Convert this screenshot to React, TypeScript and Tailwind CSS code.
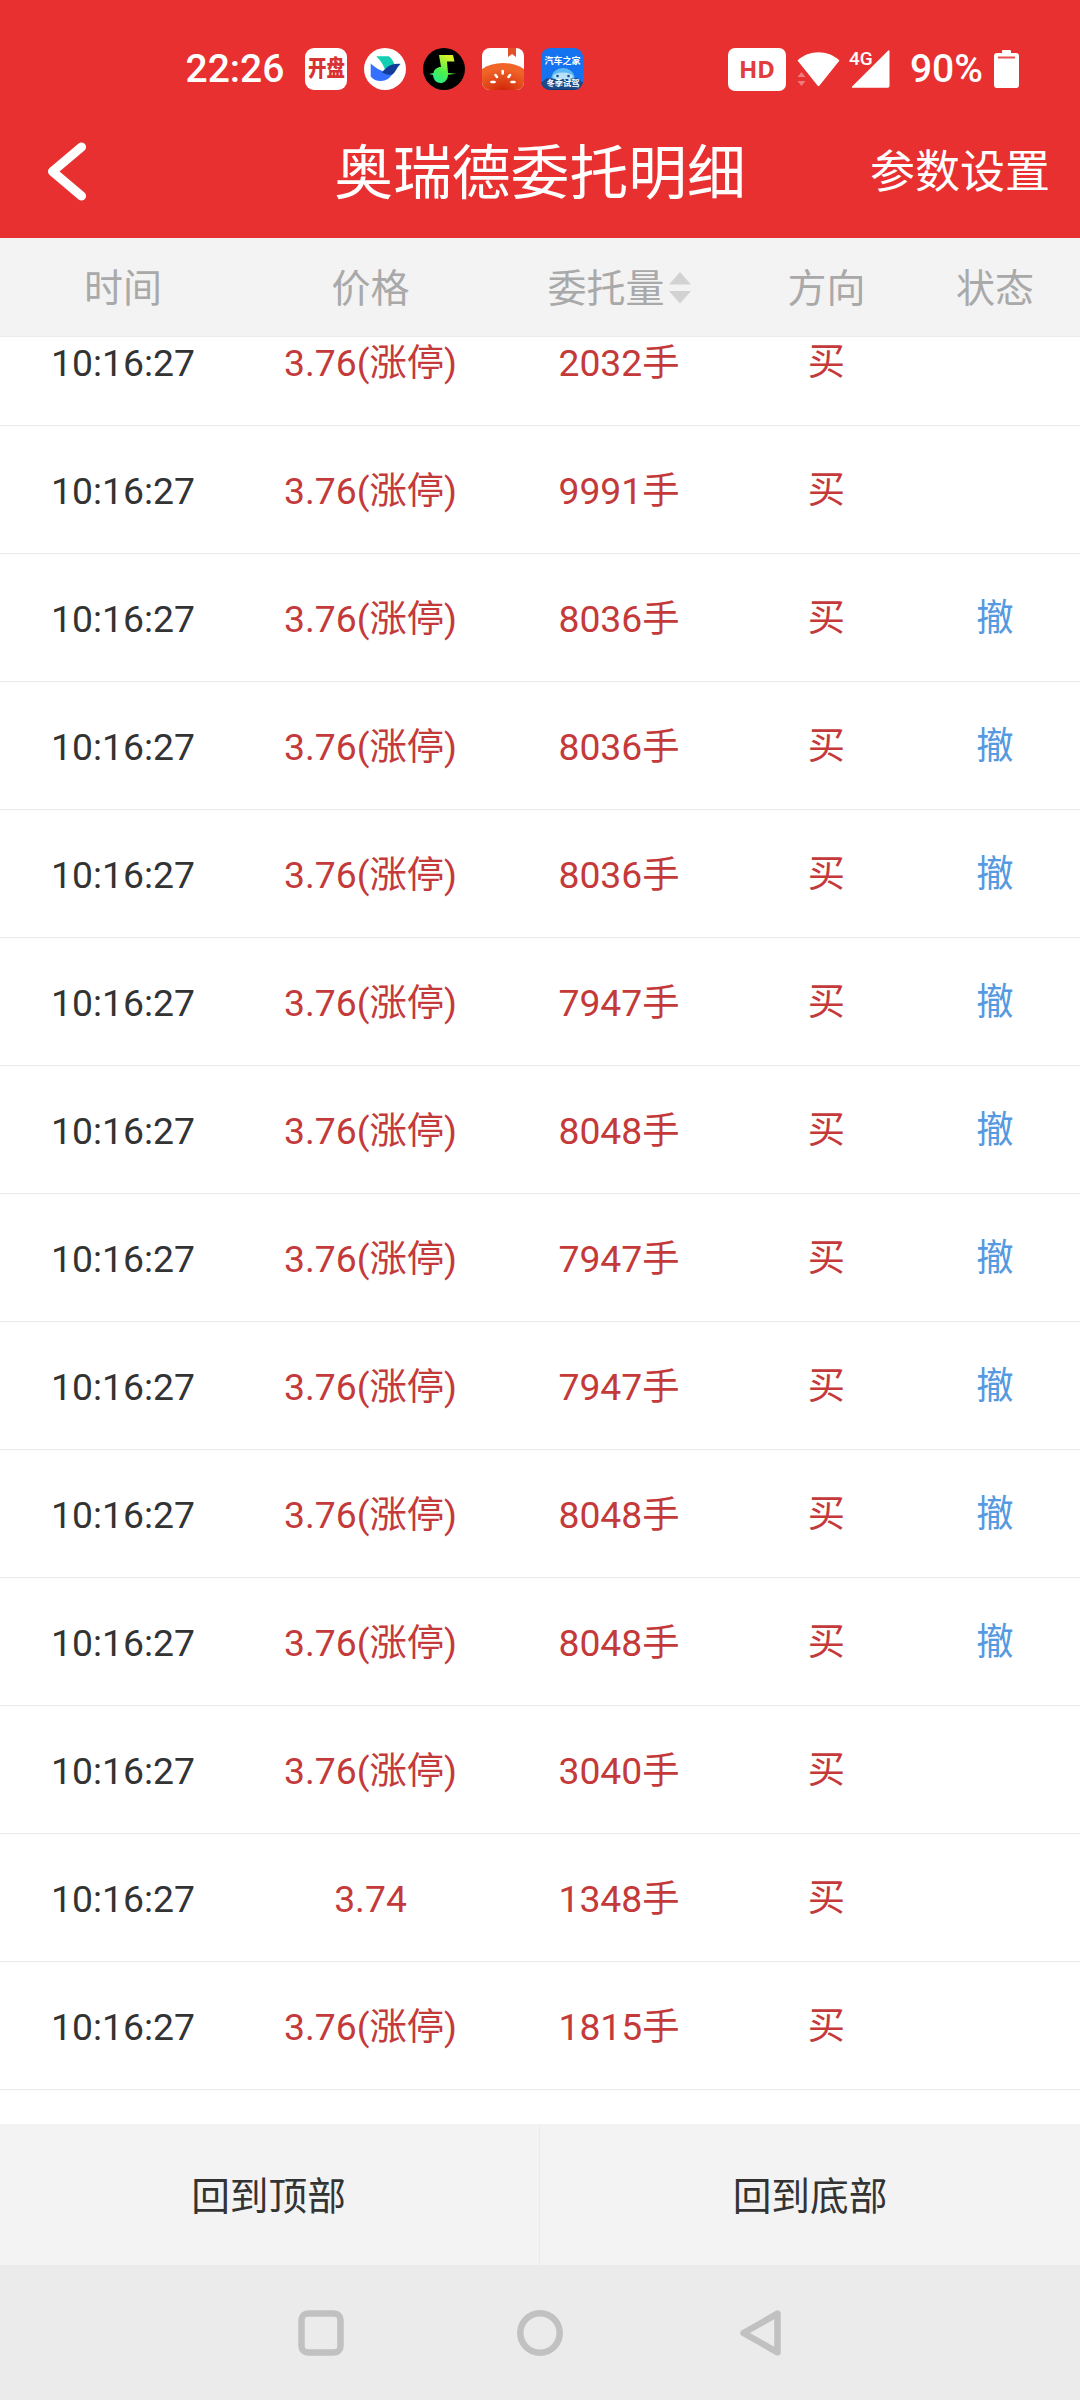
import React from 'react';

interface Order {
  time: string;
  price: string;
  volume: number;
  side: string;
  cancelled?: boolean;
}

const LIMIT = '3.76(涨停)';

const orders: Order[] = [
  { time: '10:16:27', price: LIMIT, volume: 2032, side: '买' },
  { time: '10:16:27', price: LIMIT, volume: 9991, side: '买' },
  { time: '10:16:27', price: LIMIT, volume: 8036, side: '买', cancelled: true },
  { time: '10:16:27', price: LIMIT, volume: 8036, side: '买', cancelled: true },
  { time: '10:16:27', price: LIMIT, volume: 8036, side: '买', cancelled: true },
  { time: '10:16:27', price: LIMIT, volume: 7947, side: '买', cancelled: true },
  { time: '10:16:27', price: LIMIT, volume: 8048, side: '买', cancelled: true },
  { time: '10:16:27', price: LIMIT, volume: 7947, side: '买', cancelled: true },
  { time: '10:16:27', price: LIMIT, volume: 7947, side: '买', cancelled: true },
  { time: '10:16:27', price: LIMIT, volume: 8048, side: '买', cancelled: true },
  { time: '10:16:27', price: LIMIT, volume: 8048, side: '买', cancelled: true },
  { time: '10:16:27', price: LIMIT, volume: 3040, side: '买' },
  { time: '10:16:27', price: '3.74', volume: 1348, side: '买' },
  { time: '10:16:27', price: LIMIT, volume: 1815, side: '买' },
];

const GRID = 'grid grid-cols-[246px_249px_248px_167px_170px] items-center justify-items-center';

const AppIcons = () => (
  <div className="ml-[21px] flex gap-[17px]">
    <div className="flex h-[42px] w-[42px] items-center justify-center rounded-[9px] bg-white">
      <span className="scale-y-[1.2] whitespace-nowrap text-[18.5px] leading-none font-black text-[#d93232]">开盘</span>
    </div>

    <svg width="42" height="42" viewBox="0 0 42 42">
      <circle cx="21" cy="21" r="21" fill="#fff" />
      <path d="M12.300 8.300H25c3 2.500 5 6 6 9.500L22 24c-2-6-5-11-9.700-15.700z" fill="#12cfb4" />
      <path d="M6.700 15.500c6 5.500 13 9.500 22.500 9.500-3 5-7 8-12.500 8-4 0-7.500-1.500-10-4.500z" fill="#3370ff" />
      <path d="M18 24.500c4-5 9-9.500 18.500-8.500-3.500 3-4.500 7.500-7.500 10-3.500 2-8 0-11-1.500z" fill="#133c9a" />
    </svg>

    <svg width="42" height="42" viewBox="0 0 42 42">
      <defs>
        <linearGradient id="note" x1="0" y1="1" x2="0.6" y2="0">
          <stop offset="0" stopColor="#1de9a0" />
          <stop offset="0.5" stopColor="#4af04e" />
          <stop offset="1" stopColor="#d8f02a" />
        </linearGradient>
      </defs>
      <circle cx="21" cy="21" r="21" fill="#000" />
      <path
        d="M16 7h14l1.500 6.500H24L25 25l8 .7-8 1c0 5-3.500 8.300-7.500 8.300S10.500 32 10 27l-4-1 4.500-1c.5-3.500 3.500-6 7.500-6z"
        fill="url(#note)"
      />
    </svg>

    <svg width="42" height="42" viewBox="0 0 42 42">
      <defs>
        <clipPath id="tile">
          <rect width="42" height="42" rx="8" />
        </clipPath>
        <radialGradient id="tomato" cx="0.5" cy="0.7" r="0.55">
          <stop offset="0" stopColor="#cf2408" />
          <stop offset="1" stopColor="#f06428" />
        </radialGradient>
      </defs>
      <g clipPath="url(#tile)">
        <rect width="42" height="42" fill="#fff" />
        <path d="M26 0h8v9l-4-3-4 3z" fill="#e2502a" />
        <ellipse cx="21" cy="35" rx="29" ry="20" fill="url(#tomato)" />
        <path
          d="M20.700 23v2.500M13.500 27l1.500 2M28 27l-1.500 2M9.500 34h3M29.500 34h3"
          stroke="#fff"
          strokeWidth="2.600"
          strokeLinecap="round"
        />
      </g>
    </svg>

    <div className="relative h-[42px] w-[42px] overflow-hidden rounded-[9px] bg-[#1673f0]">
      <svg width="42" height="42" viewBox="0 0 42 42">
        <rect y="34" width="42" height="8" fill="#123c78" />
        <ellipse cx="22" cy="30" rx="11.500" ry="10" fill="#5cb8f2" />
        <ellipse cx="22" cy="28.500" rx="10" ry="4" fill="#b8e2fa" />
        <circle cx="16.500" cy="28" r="1.300" fill="#174a80" />
        <circle cx="27.500" cy="28" r="1.300" fill="#174a80" />
        <path d="M1 34l5-4 8 1h14l8-1 5 4v5l-5 2H6l-5-2z" fill="#1c4a88" />
      </svg>
      <span className="absolute top-[8px] left-[3px] whitespace-nowrap text-[9px] leading-[10px] font-bold text-white">汽车之家</span>
      <span className="absolute top-[31px] left-[5px] whitespace-nowrap text-[8.3px] leading-[8px] font-bold text-white">冬季试驾</span>
    </div>
  </div>
);

const StatusBar = () => (
  <div className="flex h-[138px] items-center pr-[61px] pl-[185.5px] text-white">
    <span className="text-[39px] leading-none font-medium">22:26</span>
    <AppIcons />

    <div className="ml-auto flex items-center">
      <div className="flex h-[43px] w-[58px] items-center justify-center rounded-[7px] bg-white">
        <span className="font-['Noto_Sans'] text-[24px] leading-none font-bold text-[#e23c3c]">HD</span>
      </div>
      <svg className="ml-[11px]" width="43" height="38" viewBox="0 0 43 38" fill="#fff">
        <path d="M.5 10.500C12-.5 31-.5 42.500 10.500L22.500 35.500q-1 1.500-2 0z" />
        <path d="M.5 27l4-5 4 5zM.5 31h8l-4 5z" fill="#f47b7b" stroke="#e83030" strokeWidth="1" paintOrder="stroke" />
      </svg>
      <div className="relative ml-[9px] h-[38px] w-[42px]">
        <span className="absolute top-[-1px] left-0 text-[19px] leading-[19px] font-medium">4G</span>
        <svg width="42" height="38" viewBox="0 0 42 38" fill="#fff">
          <path d="M39 .8q1.500-1.300 1.500.8V36q0 1.700-1.700 1.700H4q-2 0-.6-1.500z" />
        </svg>
      </div>
      <span className="ml-[19px] text-[39px] leading-none font-medium">90%</span>
      <svg className="ml-[11px]" width="25" height="38" viewBox="0 0 25 38">
        <path d="M8 1q0-1 1-1h7q1 0 1 1v2h5q3 0 3 3v29q0 3-3 3H3q-3 0-3-3V6q0-3 3-3h5z" fill="#fff" />
        <rect x="4" y="6.500" width="17" height="2" fill="#e85050" />
      </svg>
    </div>
  </div>
);

const App: React.FC = () => {
  return (
    <div className="flex h-[2400px] w-[1080px] flex-col overflow-hidden bg-white font-[Roboto,'Noto_Sans_CJK_SC',sans-serif]">
      {/* Header */}
      <header className="h-[238px] shrink-0 bg-[#e83030] text-white">
        <StatusBar />
        <div className="grid h-[68px] grid-cols-[1fr_auto_1fr] items-center px-[30px]">
          <button className="justify-self-start pb-[2px] pl-4">
            <svg width="40" height="60" viewBox="0 0 40 60" fill="none">
              <path d="M35.500 6L6.500 30.500 35.500 55" stroke="#fff" strokeWidth="9" strokeLinecap="round" strokeLinejoin="round" />
            </svg>
          </button>
          <h1 className="pt-[5px] text-[58.8px] leading-none">奥瑞德委托明细</h1>
          <button className="justify-self-end text-[45px] leading-none">参数设置</button>
        </div>
      </header>

      {/* Column titles */}
      <div className={`${GRID} h-[99px] shrink-0 border-b border-[#ebebeb] bg-[#f3f3f3] pt-[5px] text-[39px] leading-none text-[#a9a9a9]`}>
        <span>时间</span>
        <span>价格</span>
        <span className="flex items-center">
          委托量
          <svg className="mb-[3px] ml-1" width="22" height="32" viewBox="0 0 22 32" fill="#d2d2d2">
            <path d="M11 0l11 12.500H0zM0 19h22L11 31.500z" />
          </svg>
        </span>
        <span>方向</span>
        <span>状态</span>
      </div>

      {/* Order list, scrolled so that the first row is partly hidden */}
      <div className="flex flex-1 flex-col justify-end overflow-hidden pb-[34px]">
        {orders.map((order, index) => (
          <div
            key={index}
            className={`${GRID} h-[128px] shrink-0 border-b border-[#ebebeb] pt-[4px] text-[37.3px] leading-none text-[#c43a3a]`}
          >
            <span className="text-[#333]">{order.time}</span>
            <span>{order.price}</span>
            <span>{order.volume}手</span>
            <span className="pb-px">{order.side}</span>
            <span className="pb-px text-[#5599e0]">{order.cancelled ? '撤' : ''}</span>
          </div>
        ))}
      </div>

      {/* Jump buttons */}
      <div className="grid h-[141px] shrink-0 grid-cols-2 bg-[#f3f3f3] text-[38.7px] text-[#333]">
        <button className="border-r border-[#ebebeb] pt-[5px] pr-[2px]">回到顶部</button>
        <button className="pt-[5px]">回到底部</button>
      </div>

      {/* Android navigation */}
      <nav className="flex h-[135px] shrink-0 items-center justify-center gap-[173px] bg-[#ebebeb]">
        <svg width="46" height="46" viewBox="0 0 46 46" fill="none" stroke="#c1c1c1" strokeWidth="6.500">
          <rect x="3.500" y="3.500" width="39" height="39" rx="6.500" />
        </svg>
        <svg width="46" height="46" viewBox="0 0 46 46" fill="none" stroke="#c1c1c1" strokeWidth="6.500">
          <circle cx="23" cy="23" r="19.700" />
        </svg>
        <svg width="46" height="46" viewBox="0 0 46 46" fill="none" stroke="#c1c1c1" strokeWidth="6.500" strokeLinejoin="round">
          <path d="M41.500 3.700v38.600L7.500 23z" />
        </svg>
      </nav>
    </div>
  );
};

export default App;
